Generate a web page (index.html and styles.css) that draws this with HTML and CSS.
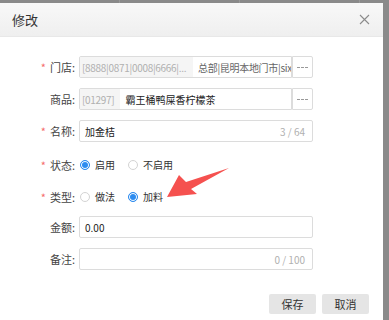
FILE: index.html
```html
<!DOCTYPE html>
<html lang="zh-CN">
<head>
  <meta charset="UTF-8" />
  <title>修改</title>
  <link rel="stylesheet" href="styles.css">
</head>
<body>
  <div class="topbar">
    <div class="cell"></div>
    <div class="cell"></div>
    <div class="cell"></div>
  </div>

  <div class="dialog">
    <div class="dlg-head">
      <span class="dlg-title">修改</span>
      <svg class="dlg-close" width="11" height="11" viewBox="0 0 11 11">
        <path d="M1 1 L10 10 M10 1 L1 10" stroke="#8c8c8c" stroke-width="1.1" fill="none" />
      </svg>
    </div>

    <div class="dlg-body">
      <div class="row">
        <label class="lbl"><i class="req">*</i>门店:</label>
        <div class="pick">
          <div class="box">
            <span class="prefix wide">[8888|0871|0008|6666|...</span>
            <span class="val muted">总部|昆明本地门市|six</span>
          </div>
          <button class="more">
            <svg width="11" height="3" viewBox="0 0 11 3"><path d="M0 1.5h3M4 1.5h3M8 1.5h3" stroke="#999" stroke-width="1" /></svg>
          </button>
        </div>
      </div>

      <div class="row">
        <label class="lbl">商品:</label>
        <div class="pick">
          <div class="box">
            <span class="prefix">[01297]</span>
            <span class="val">霸王桶鸭屎香柠檬茶</span>
          </div>
          <button class="more">
            <svg width="11" height="3" viewBox="0 0 11 3"><path d="M0 1.5h3M4 1.5h3M8 1.5h3" stroke="#999" stroke-width="1" /></svg>
          </button>
        </div>
      </div>

      <div class="row">
        <label class="lbl"><i class="req">*</i>名称:</label>
        <div class="box field">
          <span class="val">加金桔</span>
          <span class="count">3 / 64</span>
        </div>
      </div>

      <div class="row choice">
        <label class="lbl"><i class="req">*</i>状态:</label>
        <div class="radios">
          <span class="radio on"></span><span class="opt">启用</span>
          <span class="radio"></span><span class="opt">不启用</span>
        </div>
      </div>

      <div class="row choice">
        <label class="lbl"><i class="req">*</i>类型:</label>
        <div class="radios">
          <span class="radio"></span><span class="opt">做法</span>
          <span class="radio on"></span><span class="opt">加料</span>
        </div>
      </div>

      <div class="row">
        <label class="lbl">金额:</label>
        <div class="box field">
          <span class="val">0.00</span>
        </div>
      </div>

      <div class="row">
        <label class="lbl">备注:</label>
        <div class="box field">
          <span class="val"></span>
          <span class="count">0 / 100</span>
        </div>
      </div>
    </div>

    <div class="dlg-foot">
      <button class="btn">保存</button>
      <button class="btn">取消</button>
    </div>
  </div>

  <svg class="arrow" width="389" height="320" viewBox="0 0 389 320">
    <polygon points="167,197 179,175 186,182 229,168 191,189 197,194" fill="#f5514f" />
  </svg>
</body>
</html>
```

FILE: styles.css
```css
* {
  box-sizing: border-box;
}

body {
  margin: 0;
  width: 389px;
  height: 320px;
  overflow: hidden;
  background: #8a8a8a;
  font-family: "Noto Sans CJK SC", "Noto Sans", sans-serif;
  font-size: 11px;
  color: #333;
  position: relative;
}

.topbar {
  display: flex;
  height: 3px;
}

.topbar .cell {
  width: 120px;
  border-right: 1px solid #9a9a9a;
}

.dialog {
  width: 383px;
  height: 317px;
  background: #fff;
}

.dlg-head {
  height: 34px;
  display: flex;
  align-items: center;
  justify-content: space-between;
  padding: 0 13px 0 12px;
  background: linear-gradient(#f8f8f8, #efefef);
  border-bottom: 1px solid #e8e8e8;
}

.dlg-title {
  font-size: 13px;
  color: #333;
}

.dlg-body {
  display: flex;
  flex-direction: column;
  gap: 10px;
  padding-top: 19px;
}

.row {
  display: flex;
  align-items: center;
  height: 22px;
}

.row.choice {
  padding-top: 3px;
}

.lbl {
  width: 79px;
  padding-right: 4px;
  text-align: right;
  color: #444;
}

.req {
  font-style: normal;
  color: #f56c6c;
  margin-right: 4px;
}

.pick {
  display: flex;
  width: 234px;
  height: 22px;
}

.box {
  flex: 1;
  min-width: 0;
  display: flex;
  align-items: center;
  height: 22px;
  border: 1px solid #dcdcdc;
  border-radius: 2px;
  overflow: hidden;
  white-space: nowrap;
  font-size: 10px;
}

.pick .box {
  border-radius: 2px 0 0 2px;
}

.field {
  flex: none;
  width: 234px;
  padding: 0 7px 0 0;
}

.prefix {
  height: 100%;
  display: flex;
  align-items: center;
  padding: 0 6px 0 2px;
  background: #f5f5f5;
  color: #b0b0b0;
  letter-spacing: -0.3px;
}

.prefix.wide {
  flex: none;
  width: 113px;
  overflow: hidden;
}

.val {
  padding-left: 5px;
  flex: 1;
  overflow: hidden;
  color: #222;
}

.val.muted {
  color: #666;
  letter-spacing: -0.3px;
}

.count {
  color: #b0b0b0;
}

.more {
  flex: none;
  width: 21px;
  height: 22px;
  display: flex;
  align-items: center;
  justify-content: center;
  border: 1px solid #dcdcdc;
  border-radius: 0 2px 2px 0;
  background: #fff;
  padding: 0;
}

.radios {
  display: flex;
  align-items: center;
  padding-left: 1px;
  font-size: 10px;
}

.radio {
  width: 10px;
  height: 10px;
  border: 1px solid #d3d3d3;
  border-radius: 50%;
  background: #fff;
  margin-right: 5px;
}

.radio.on {
  border-color: #2d8cf0;
  background: #2d8cf0;
  box-shadow: inset 0 0 0 1px #fff;
}

.opt {
  margin-right: 13px;
  color: #333;
}

.dlg-foot {
  display: flex;
  justify-content: flex-end;
  gap: 6px;
  padding: 24px 14px 0 0;
}

.btn {
  width: 47px;
  height: 20px;
  border: none;
  border-radius: 2px;
  background: #e5e5e5;
  color: #333;
  font-family: inherit;
  font-size: 11px;
  padding: 0;
}

.arrow {
  position: absolute;
  left: 0;
  top: 0;
}
```
